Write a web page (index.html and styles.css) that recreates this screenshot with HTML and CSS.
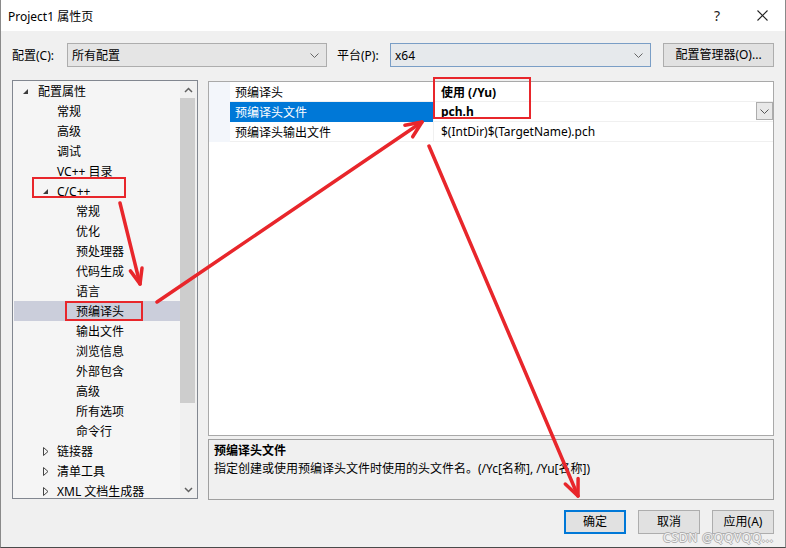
FILE: index.html
```html
<!DOCTYPE html>
<html lang="zh-CN">
<head>
<meta charset="utf-8">
<title>Project1 属性页</title>
<link rel="stylesheet" href="styles.css">
</head>
<body>
<div class="window">
  <div class="titlebar">
    <span class="title">Project1 属性页</span>
    <span class="tb-btn help">?</span>
    <span class="tb-btn close"><svg width="11" height="11" viewBox="0 0 11 11"><path d="M0.5 0.5 L10.5 10.5 M10.5 0.5 L0.5 10.5" stroke="#222" stroke-width="1.1" fill="none"/></svg></span>
  </div>
  <div class="content">
    <div class="toolbar">
      <span class="lbl lbl-config">配置(C):</span>
      <div class="combo combo-config"><span>所有配置</span><svg class="chev" width="9" height="5" viewBox="0 0 9 5"><path d="M0.5 0.5 L4.5 4.5 L8.5 0.5" stroke="#666" fill="none"/></svg></div>
      <span class="lbl lbl-platform">平台(P):</span>
      <div class="combo combo-platform"><span>x64</span><svg class="chev" width="9" height="5" viewBox="0 0 9 5"><path d="M0.5 0.5 L4.5 4.5 L8.5 0.5" stroke="#666" fill="none"/></svg></div>
      <div class="btn btn-mgr">配置管理器(O)...</div>
    </div>
    <div class="main">
      <div class="tree">
        <div class="tree-list">
          <div class="trow l0"><span class="tri"><svg width="5" height="5" viewBox="0 0 5 5"><polygon points="5,0 5,5 0,5" fill="#3c3c3c"/></svg></span>配置属性</div>
          <div class="trow l1"><span class="tri"></span>常规</div>
          <div class="trow l1"><span class="tri"></span>高级</div>
          <div class="trow l1"><span class="tri"></span>调试</div>
          <div class="trow l1"><span class="tri"></span>VC++ 目录</div>
          <div class="trow l1"><span class="tri"><svg width="5" height="5" viewBox="0 0 5 5"><polygon points="5,0 5,5 0,5" fill="#3c3c3c"/></svg></span>C/C++</div>
          <div class="trow l2"><span class="tri"></span>常规</div>
          <div class="trow l2"><span class="tri"></span>优化</div>
          <div class="trow l2"><span class="tri"></span>预处理器</div>
          <div class="trow l2"><span class="tri"></span>代码生成</div>
          <div class="trow l2"><span class="tri"></span>语言</div>
          <div class="trow l2 selected"><span class="tri"></span>预编译头</div>
          <div class="trow l2"><span class="tri"></span>输出文件</div>
          <div class="trow l2"><span class="tri"></span>浏览信息</div>
          <div class="trow l2"><span class="tri"></span>外部包含</div>
          <div class="trow l2"><span class="tri"></span>高级</div>
          <div class="trow l2"><span class="tri"></span>所有选项</div>
          <div class="trow l2"><span class="tri"></span>命令行</div>
          <div class="trow l1"><span class="tri"><svg width="6" height="9" viewBox="0 0 6 9"><polygon points="0.5,0.5 5,4.5 0.5,8.5" fill="none" stroke="#444"/></svg></span>链接器</div>
          <div class="trow l1"><span class="tri"><svg width="6" height="9" viewBox="0 0 6 9"><polygon points="0.5,0.5 5,4.5 0.5,8.5" fill="none" stroke="#444"/></svg></span>清单工具</div>
          <div class="trow l1"><span class="tri"><svg width="6" height="9" viewBox="0 0 6 9"><polygon points="0.5,0.5 5,4.5 0.5,8.5" fill="none" stroke="#444"/></svg></span>XML 文档生成器</div>
        </div>
        <div class="vscroll">
          <div class="sb-arrow"><svg width="9" height="6" viewBox="0 0 9 6"><path d="M1 5 L4.5 1.5 L8 5" stroke="#606060" stroke-width="1.5" fill="none"/></svg></div>
          <div class="sb-track"><div class="sb-thumb"></div></div>
          <div class="sb-arrow"><svg width="9" height="6" viewBox="0 0 9 6"><path d="M1 1 L4.5 4.5 L8 1" stroke="#606060" stroke-width="1.5" fill="none"/></svg></div>
        </div>
      </div>
      <div class="right">
        <div class="grid">
          <div class="grow">
            <div class="gstrip"></div>
            <div class="gname">预编译头</div>
            <div class="gval bold">使用 (/Yu)</div>
          </div>
          <div class="grow sel">
            <div class="gstrip"></div>
            <div class="gname">预编译头文件</div>
            <div class="gval bold">pch.h<span class="dd"><svg width="9" height="5" viewBox="0 0 9 5"><path d="M0.5 0.5 L4.5 4.5 L8.5 0.5" stroke="#555" fill="none"/></svg></span></div>
          </div>
          <div class="grow">
            <div class="gstrip"></div>
            <div class="gname">预编译头输出文件</div>
            <div class="gval">$(IntDir)$(TargetName).pch</div>
          </div>
        </div>
        <div class="desc">
          <div class="desc-title">预编译头文件</div>
          <div class="desc-text">指定创建或使用预编译头文件时使用的头文件名。(/Yc[名称], /Yu[名称])</div>
        </div>
      </div>
    </div>
    <div class="footer">
      <div class="btn btn-ok">确定</div>
      <div class="btn">取消</div>
      <div class="btn">应用(A)</div>
    </div>
  </div>
  <div class="watermark">CSDN @QQVQQ...</div>
  <svg class="annot" width="786" height="548" viewBox="0 0 786 548">
    <g fill="none" stroke="#e8262b" stroke-width="2">
      <rect x="434" y="78" width="96" height="40"/>
      <rect x="33" y="178" width="92" height="19"/>
      <rect x="66" y="302" width="76" height="18"/>
    </g>
    <g fill="none" stroke="#e8262b" stroke-width="3.5" stroke-linecap="round" stroke-linejoin="round">
      <line x1="120" y1="203" x2="140" y2="284"/>
      <polyline points="130.4,270.9 140,284 142,268.1"/>
      <line x1="157" y1="302" x2="422" y2="122"/>
      <polyline points="412.7,136.8 422,122 404.9,125.2"/>
      <line x1="429" y1="146" x2="578" y2="496"/>
      <polyline points="565.3,484 578,496 578.1,478.6"/>
    </g>
  </svg>
</div>
</body>
</html>
```

FILE: styles.css
```css
* { box-sizing: border-box; }
html, body { margin: 0; padding: 0; }
body {
  font-family: "Noto Sans", "Noto Sans CJK SC", sans-serif;
  font-size: 12px;
  color: #000;
  background: #f0f0f0;
}
.window {
  position: relative;
  width: 786px;
  height: 548px;
  display: flex;
  flex-direction: column;
  border-left: 1px solid #8a8a8a;
  border-right: 1px solid #8a8a8a;
  border-bottom: 1px solid #4a4a4a;
  background: #f0f0f0;
  overflow: hidden;
}
.titlebar {
  height: 31px;
  flex: none;
  background: #fff;
  display: flex;
  align-items: center;
}
.title { padding-left: 7px; flex: 1; font-size: 12px; }
.tb-btn {
  width: 46px;
  height: 31px;
  display: flex;
  align-items: center;
  justify-content: center;
  color: #222;
}
.help { font-size: 14px; padding-left: 2px; }
.content {
  flex: 1;
  padding: 0 11px;
  display: flex;
  flex-direction: column;
}
.toolbar {
  margin-top: 12px;
  height: 24px;
  display: flex;
  align-items: center;
}
.lbl { white-space: nowrap; }
.lbl-config { width: 55px; }
.lbl-platform { width: 53px; margin-left: 10px; }
.combo {
  height: 24px;
  border: 1px solid #adadad;
  background: #e5e5e5;
  display: flex;
  align-items: center;
  justify-content: space-between;
  padding: 0 7px 0 4px;
}
.combo-config { width: 260px; }
.combo-platform { width: 261px; border-color: #7a9ec6; background: #e6e9ec; }
.btn {
  height: 24px;
  width: 62px;
  border: 1px solid #adadad;
  background: #e1e1e1;
  display: flex;
  align-items: center;
  justify-content: center;
  white-space: nowrap;
  line-height: 14px;
}
.btn-mgr { width: 111px; margin-left: 12px; }
.btn-ok { border: 2px solid #0078d7; }
.main {
  margin-top: 13px;
  height: 420px;
  display: flex;
}
.tree {
  width: 186px;
  height: 419px;
  border: 1px solid #828790;
  background: #f5f5f5;
  display: flex;
}
.tree-list { flex: 1; }
.trow {
  height: 20px;
  display: flex;
  align-items: center;
  white-space: nowrap;
}
.tri {
  width: 16px;
  height: 20px;
  flex: none;
  display: flex;
  align-items: center;
}
.l0 { padding-left: 9px; }
.l0 .tri svg { margin-left: 1px; }
.l1 { padding-left: 28px; }
.l1 .tri svg { margin-left: 2px; }
.l2 { padding-left: 47px; }
.selected { background: #cbcedb; margin-left: 1px; padding-left: 46px; }
.vscroll {
  width: 17px;
  background: #f0f0f0;
  display: flex;
  flex-direction: column;
}
.sb-arrow {
  height: 17px;
  display: flex;
  align-items: center;
  justify-content: center;
}
.sb-track { flex: 1; }
.sb-thumb { height: 305px; background: #cdcdcd; margin-right: 2px; }
.right {
  margin-left: 10px;
  width: 566px;
  padding-top: 1px;
  display: flex;
  flex-direction: column;
}
.grid {
  height: 355px;
  border: 1px solid #a9a9a9;
  background: #fff;
}
.grow {
  height: 20px;
  display: flex;
}
.gstrip { width: 21px; background: #f3f6fb; }
.gname {
  width: 203px;
  padding-left: 5px;
  border-bottom: 1px solid #f0f0f0;
  display: flex;
  align-items: center;
  white-space: nowrap;
}
.gval {
  flex: 1;
  padding-left: 7px;
  border-left: 1px solid #f0f0f0;
  border-bottom: 1px solid #f0f0f0;
  display: flex;
  align-items: center;
  white-space: nowrap;
}
.bold { font-weight: 700; }
.sel .gname { background: #0078d7; color: #fff; border-bottom-color: #0078d7; }
.dd {
  margin-left: auto;
  align-self: flex-start;
  width: 17px;
  height: 18px;
  border: 1px solid #adadad;
  background: #e8e8e8;
  display: flex;
  align-items: center;
  justify-content: center;
}
.desc {
  margin-top: 3px;
  height: 61px;
  border: 1px solid #a0a0a0;
  background: #f0f0f0;
  padding: 2px 5px;
}
.desc-title { font-weight: 700; line-height: 18px; }
.desc-text { line-height: 18px; }
.footer {
  margin-top: 10px;
  display: flex;
  justify-content: flex-end;
  gap: 12px;
}
.watermark {
  position: absolute;
  left: 662px;
  top: 532px;
  font-size: 12px;
  line-height: 12px;
  color: #f2f2f2;
  text-shadow: 1px 0 0 #b0b0b0, -1px 0 0 #b0b0b0, 0 1px 0 #b0b0b0, 0 -1px 0 #b0b0b0;
  white-space: nowrap;
  letter-spacing: 0.8px;
}
.annot {
  position: absolute;
  left: -1px;
  top: 0;
  pointer-events: none;
}
```
